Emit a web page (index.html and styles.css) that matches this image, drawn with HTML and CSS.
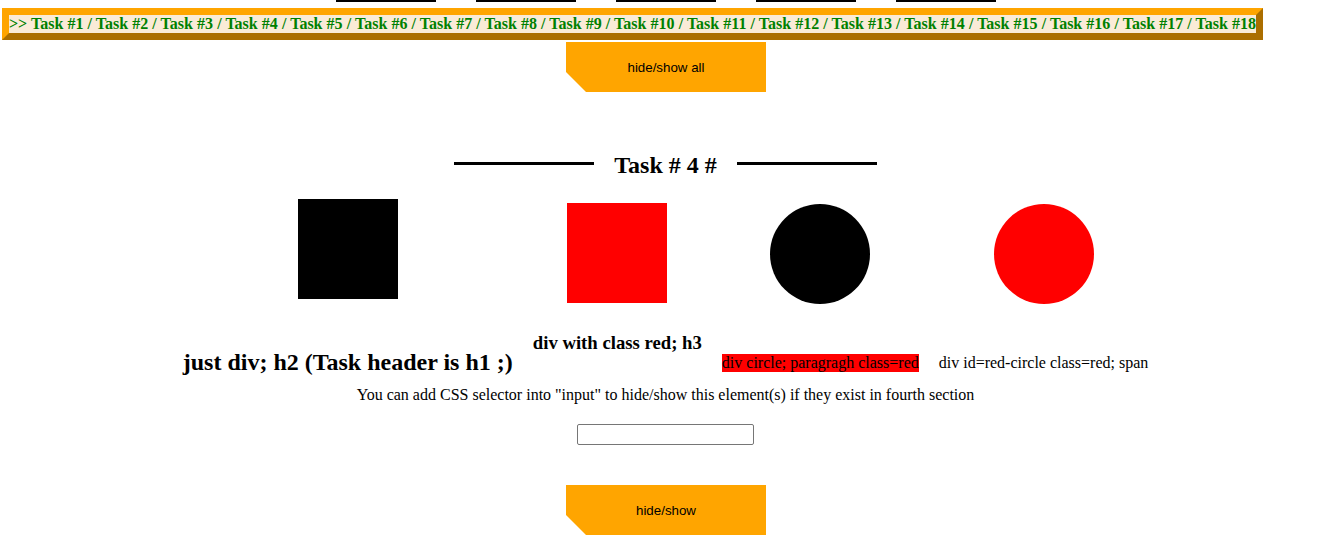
FILE: index.html
```html
<!DOCTYPE html>
<html>
<head>
<meta charset="utf-8">
<link rel="stylesheet" href="styles.css">
</head>
<body>
<div class="page">
  <div class="bars">
    <div class="bar"></div><div class="bar"></div><div class="bar"></div><div class="bar"></div><div class="bar"></div>
  </div>
  <nav class="tasks">&gt;&gt; Task #1 / Task #2 / Task #3 / Task #4 / Task #5 / Task #6 / Task #7 / Task #8 / Task #9 / Task #10 / Task #11 / Task #12 / Task #13 / Task #14 / Task #15 / Task #16 / Task #17 / Task #18</nav>
  <button class="btn btn-all">hide/show all</button>
  <div class="task-head">
    <div class="rule"></div>
    <h1 class="task-title">Task # 4 #</h1>
    <div class="rule"></div>
  </div>
  <div class="shapes">
    <div class="item">
      <div class="shape black sq1"></div>
      <h2 class="t-h2">just div; h2 (Task header is h1 ;)</h2>
    </div>
    <div class="item">
      <div class="shape red sq2"></div>
      <h3 class="t-h3">div with class red; h3</h3>
    </div>
    <div class="item">
      <div class="shape black circle"></div>
      <p class="t-p">div circle; paragragh class=red</p>
    </div>
    <div class="item">
      <div class="shape red circle"></div>
      <span class="t-span">div id=red-circle class=red; span</span>
    </div>
  </div>
  <p class="note">You can add CSS selector into "input" to hide/show this element(s) if they exist in fourth section</p>
  <input class="sel" type="text">
  <button class="btn btn-one">hide/show</button>
</div>
</body>
</html>
```

FILE: styles.css
```css
html, body {
  margin: 0;
  padding: 0;
  background: #fff;
}
body {
  font-family: "Liberation Serif", "Times New Roman", serif;
  color: #000;
}
.page {
  width: 1331px;
  display: flex;
  flex-direction: column;
  align-items: center;
}
.bars {
  display: flex;
  gap: 40px;
  height: 2px;
}
.bar {
  width: 100px;
  height: 2px;
  background: #000;
}
.tasks {
  align-self: flex-start;
  margin: 6px 0 0 2px;
  border: 7px outset orange;
  background: antiquewhite;
  color: green;
  font-weight: bold;
  font-size: 16px;
  line-height: 18px;
  word-spacing: 0.1px;
  white-space: nowrap;
}
.btn {
  width: 200px;
  height: 50px;
  border: none;
  background: orange;
  font-family: "Liberation Sans", Arial, sans-serif;
  font-size: 13.333px;
  color: #000;
  padding: 0;
  margin-left: 1px;
  clip-path: polygon(0 0, 100% 0, 100% 100%, 20px 100%, 0 calc(100% - 20px));
}
.btn-all {
  margin-top: 2px;
}
.task-head {
  display: flex;
  align-items: flex-start;
  gap: 20px;
  margin-top: 59px;
  height: 28px;
}
.rule {
  width: 140px;
  height: 3px;
  background: #000;
  margin-top: 11px;
}
.task-title {
  margin: 0;
  font-size: 24px;
  line-height: 28px;
  font-weight: bold;
}
.shapes {
  display: flex;
  align-items: flex-start;
  gap: 20px;
  margin-top: 20px;
}
.item {
  display: flex;
  flex-direction: column;
  align-items: center;
}
.shape {
  width: 100px;
  height: 100px;
}
.black { background: #000; }
.red { background: red; }
.sq1 { margin-top: 0; }
.sq2 { margin-top: 4px; }
.circle {
  border-radius: 50%;
  margin-top: 5px;
}
.t-h2 {
  margin: 49px 0 0;
  font-size: 24px;
  line-height: 28px;
  white-space: nowrap;
}
.t-h3 {
  margin: 29px 0 0;
  font-size: 18.72px;
  line-height: 22px;
  white-space: nowrap;
}
.t-p {
  margin: 50px 0 0;
  font-size: 16px;
  line-height: 18px;
  background: red;
  white-space: nowrap;
}
.t-span {
  margin-top: 50px;
  font-size: 16px;
  line-height: 18px;
  white-space: nowrap;
}
.note {
  margin: 10px 0 0;
  font-size: 16px;
  line-height: 18px;
}
.sel {
  margin-top: 20px;
  width: 177px;
  height: 21px;
  box-sizing: border-box;
  border: 1px solid #767676;
  border-radius: 2px;
  padding: 1px 2px;
}
.btn-one {
  margin-top: 40px;
}
```
